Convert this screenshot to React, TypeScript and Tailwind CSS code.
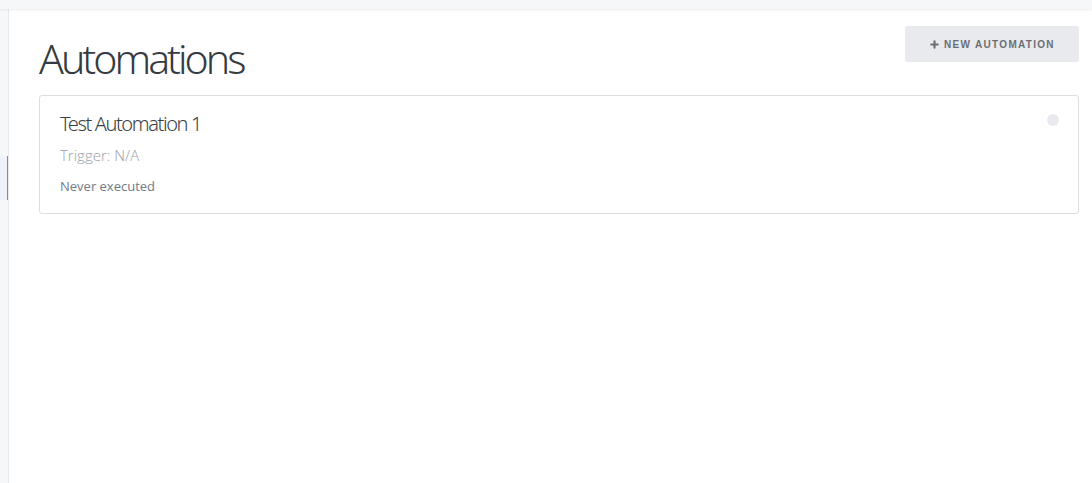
import { Plus } from "lucide-react";

const Automations = () => {
  return (
    <div className="h-[483px] w-[1092px] overflow-hidden bg-white flex flex-col">
      {/* Top bar */}
      <div className="h-[9px] shrink-0 bg-[#f6f7f9] shadow-[0_1px_3px_rgba(0,0,0,0.08)] relative z-10" />
      <div className="flex flex-1">
        {/* Sidebar */}
        <div className="w-[9px] shrink-0 bg-[#f6f7f9] border-r border-[#e6e8eb] pt-[147px]">
          <div className="h-[44px] bg-[#eef3fb] border-r border-[#5b8fe0]" />
        </div>
        {/* Main */}
        <main className="flex-1 pl-[30px] pr-[13px] pt-[17px]">
          <div className="flex items-start justify-between h-[36px]">
            <h1 className="text-[41px] font-light text-[#353b41] leading-none mt-[12px] tracking-[-3px] [font-family:'Noto_Sans',sans-serif]">
              Automations
            </h1>
            <button className="w-[174px] h-[36px] bg-[#e8eaee] rounded-[2px] flex items-center justify-center gap-[4px] text-[10px] font-bold tracking-[1.3px] text-[#6b6f74] [font-family:'Liberation_Sans',sans-serif]">
              <Plus size={11} strokeWidth={4.5} />
              NEW AUTOMATION
            </button>
          </div>

          {/* Automation card */}
          <div className="mt-[33px] border border-[#dcdee2] rounded-[3px] px-[20px] pt-[15px] pb-[18px] flex justify-between">
            <div className="flex flex-col">
              <h2 className="text-[20px] font-light text-[#3b3f44] leading-[26px] tracking-[-1.4px] [font-family:'Noto_Sans',sans-serif]">
                Test Automation 1
              </h2>
              <p className="mt-[8px] text-[15px] text-[#9aa0a6] leading-[20px] font-light [font-family:'Open_Sans',sans-serif]">
                Trigger: N/A
              </p>
              <p className="mt-[12px] text-[13px] text-[#6f7a86] leading-[18px] [font-family:'Open_Sans',sans-serif]">
                Never executed
              </p>
            </div>
            <span className="w-[12px] h-[12px] rounded-full bg-[#e9eaf0] mt-[3px] mr-[-1px]" />
          </div>
        </main>
      </div>
    </div>
  );
};

export default Automations;
